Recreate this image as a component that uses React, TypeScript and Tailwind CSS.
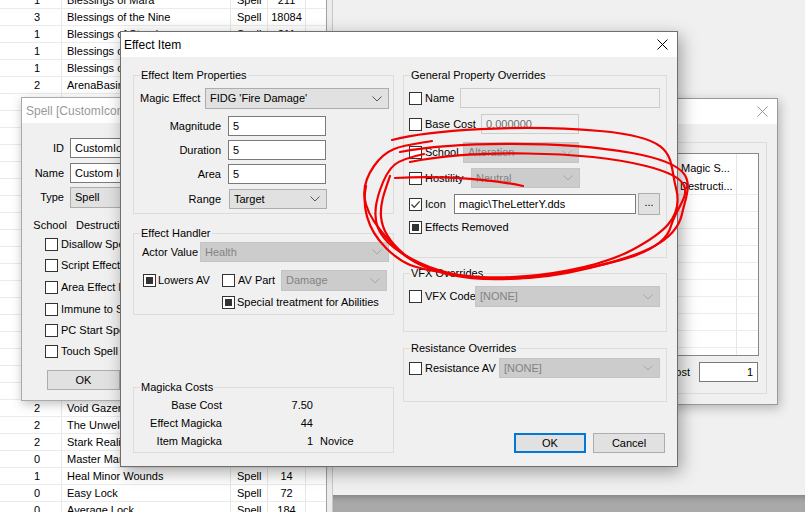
import React from 'react';
import clsx from 'clsx';

type Row = [string, string, string, string];

const listRows: Row[] = [
  ['1', 'Blessings of Mara', 'Spell', '211'],
  ['3', 'Blessings of the Nine', 'Spell', '18084'],
  ['1', 'Blessings of Stendarr', 'Spell', '211'],
  ['1', 'Blessings of Kynareth', 'Spell', '211'],
  ['1', 'Blessings of Julianos', 'Spell', '211'],
  ['2', 'ArenaBasinLesserBlessing', 'Spell', '20'],
  ['1', 'Fortify Magicka', 'Spell', '40'],
  ['1', 'Resist Fire', 'Spell', '33'],
  ['1', 'Resist Frost', 'Spell', '33'],
  ['1', 'Resist Shock', 'Spell', '33'],
  ['2', 'Shield', 'Spell', '28'],
  ['2', 'Fire Shield', 'Spell', '45'],
  ['2', 'Frost Shield', 'Spell', '45'],
  ['2', 'Shock Shield', 'Spell', '45'],
  ['0', 'Flare', 'Spell', '8'],
  ['0', 'Frostbite', 'Spell', '8'],
  ['0', 'Sparks', 'Spell', '8'],
  ['1', 'Fireball', 'Spell', '36'],
  ['1', 'Cold Touch', 'Spell', '20'],
  ['1', 'Shocking Burst', 'Spell', '52'],
  ['2', 'Night-Eye', 'Spell', '12'],
  ['2', 'Light', 'Spell', '10'],
  ['2', 'Feather', 'Spell', '16'],
  ['2', 'Water Breathing', 'Spell', '30'],
  ['2', 'Void Gazer', 'Spell', '120'],
  ['2', 'The Unwelcome Guest', 'Spell', '86'],
  ['2', 'Stark Reality', 'Spell', '60'],
  ['0', 'Master Mark', 'Spell', '420'],
  ['1', 'Heal Minor Wounds', 'Spell', '14'],
  ['0', 'Easy Lock', 'Spell', '72'],
  ['0', 'Average Lock', 'Spell', '184'],
];

function Chevron({ color = '#555' }: { color?: string }) {
  return (
    <svg width="10" height="6" viewBox="0 0 10 6" className="shrink-0">
      <path d="M0.5 0.5 L5 5 L9.5 0.5" fill="none" stroke={color} strokeWidth="1" />
    </svg>
  );
}

function CloseX({ color = '#000' }: { color?: string }) {
  return (
    <svg width="11" height="11" viewBox="0 0 11 11" className="shrink-0">
      <path d="M0.5 0.5 L10.5 10.5 M10.5 0.5 L0.5 10.5" stroke={color} strokeWidth="1" />
    </svg>
  );
}

function Box({ state = 'off' }: { state?: 'off' | 'on' | 'fill' }) {
  return (
    <span className="flex h-[13px] w-[13px] shrink-0 items-center justify-center border border-[#333] bg-white">
      {state === 'fill' && <span className="h-[7px] w-[7px] bg-[#333]" />}
      {state === 'on' && (
        <svg width="11" height="11" viewBox="0 0 11 11">
          <path d="M1.5 5.5 L4.2 8.3 L9.6 2.4" fill="none" stroke="#333" strokeWidth="1.2" />
        </svg>
      )}
    </span>
  );
}

function Combo({ text, className, disabled }: { text: string; className: string; disabled?: boolean }) {
  return (
    <div
      className={clsx(
        'flex shrink-0 items-center justify-between border pl-[4px] pr-[6px]',
        disabled ? 'border-[#c4c4c4] bg-[#cccccc] text-[#838383]' : 'border-[#adadad] bg-[#e1e1e1] text-black',
        className,
      )}
    >
      <span className="whitespace-nowrap">{text}</span>
      <Chevron color={disabled ? '#a6a6a6' : '#555'} />
    </div>
  );
}

function Field({ text, className, disabled, right }: { text: string; className: string; disabled?: boolean; right?: boolean }) {
  return (
    <div
      className={clsx(
        'flex shrink-0 items-center border px-[4px] whitespace-nowrap',
        disabled ? 'border-[#cccccc] bg-[#f0f0f0] text-[#6d6d6d]' : 'border-[#7a7a7a] bg-white text-black',
        right && 'justify-end',
        className,
      )}
    >
      {text}
    </div>
  );
}

function Group({ title, className, children }: { title: string; className: string; children?: React.ReactNode }) {
  return (
    <div className={clsx('relative flex flex-col border border-[#dcdcdc]', className)}>
      <span className="absolute -top-[8px] left-[6px] bg-[#f0f0f0] px-[1px] leading-[14px] whitespace-nowrap">{title}</span>
      {children}
    </div>
  );
}

function Btn({ children, primary, className }: { children: React.ReactNode; primary?: boolean; className: string }) {
  return (
    <div
      className={clsx(
        'flex shrink-0 items-center justify-center bg-[#e1e1e1]',
        primary ? 'border-2 border-[#0078d7]' : 'border border-[#adadad]',
        className,
      )}
    >
      {children}
    </div>
  );
}

// hand-drawn red loops over the dialog
function Scribbles() {
  return (
    <svg className="pointer-events-none absolute left-0 top-0" width="805" height="512" viewBox="0 0 805 512">
      <g fill="none" stroke="#f00000" strokeWidth="2.2" strokeLinecap="round" strokeLinejoin="round">
        <path d="M392 140 C430 130, 520 124, 600 131 S668 158, 676 188 S662 234, 632 250 S540 280, 480 277 S402 257, 381 231 S360 186, 374 166 S402 146, 432 141" />
        <path d="M400 152 C450 142, 560 140, 632 153 S688 186, 682 214 S642 255, 590 268 S470 286, 420 263 S371 216, 380 190 S396 160, 424 154" />
        <path d="M410 162 C470 150, 582 150, 646 166 S678 200, 671 226 S622 262, 560 273 S438 282, 404 254 S381 202, 390 176" />
        <path d="M395 178 C430 176, 480 177, 523 186" />
        <path d="M366 186 C362 205, 366 228, 386 248 S420 268, 440 272" />
      </g>
    </svg>
  );
}

function BackList() {
  return (
    <div className="relative h-full w-[327px] shrink-0 overflow-hidden border-r border-[#a0a0a0] bg-white text-[11px]">
      <div className="-mt-[8px] flex flex-col">
        {listRows.map((r, i) => (
          <div key={i} className="flex h-[17px] shrink-0 items-center border-b border-[#ebebeb] leading-[16px]">
            <div className="h-full w-[62px] shrink-0 border-r border-[#e6e6e6] pr-[21px] text-right">{r[0]}</div>
            <div className="h-full w-[169px] shrink-0 overflow-hidden whitespace-nowrap border-r border-[#e6e6e6] pl-[5px]">{r[1]}</div>
            <div className="h-full w-[37px] shrink-0 border-r border-[#e6e6e6] pl-[6px]">{r[2]}</div>
            <div className="h-full w-[38px] shrink-0 border-r border-[#e6e6e6] text-center">{r[3]}</div>
          </div>
        ))}
      </div>
    </div>
  );
}

function SpellWindow() {
  const checks = [
    ['Disallow Spell Absorb/Reflect', 'mt-[4px]'],
    ['Script Effect Always Applies', 'mt-[8px]'],
    ['Area Effect Ignores LOS', 'mt-[9px]'],
    ['Immune to Silence', 'mt-[9px]'],
    ['PC Start Spell', 'mt-[8px]'],
    ['Touch Spell Explodes w/o Target', 'mt-[8px]'],
  ];
  return (
    <div className="absolute left-[21px] top-[97px] flex h-[304px] w-[200px] flex-col border border-[#aaaaaa] bg-[#f0f0f0] shadow-[1px_3px_10px_rgba(0,0,0,0.25)]">
      <div className="flex h-[25px] shrink-0 items-center bg-white pl-[4px] text-[12px] text-[#999]">Spell [CustomIconSpell]</div>
      <div className="flex flex-col text-[11px]">
        <div className="mt-[15px] flex h-[20px] items-center gap-[6px]">
          <span className="w-[45px] text-right">ID</span>
          <Field text="CustomIconSpell" className="h-[20px] w-[150px]" />
        </div>
        <div className="mt-[5px] flex h-[20px] items-center gap-[6px]">
          <span className="w-[45px] text-right">Name</span>
          <Field text="Custom Icon Spell" className="h-[20px] w-[150px]" />
        </div>
        <div className="mt-[4px] flex h-[21px] items-center gap-[6px]">
          <span className="w-[45px] text-right">Type</span>
          <Combo text="Spell" className="h-[21px] w-[150px]" />
        </div>
        <div className="mt-[8px] flex h-[18px] items-center gap-[9px]">
          <span className="w-[45px] text-right">School</span>
          <span>Destruction</span>
        </div>
        {checks.map(([t, m]) => (
          <div key={t} className={clsx('flex h-[13px] items-center gap-[3px] pl-[23px] whitespace-nowrap', m)}>
            <Box />
            <span>{t}</span>
          </div>
        ))}
        <Btn className="ml-[25px] mt-[12px] h-[20px] w-[73px]">OK</Btn>
      </div>
    </div>
  );
}

function SideWindow() {
  return (
    <div className="absolute left-[670px] top-[98px] flex h-[307px] w-[108px] flex-col border border-[#999] bg-[#f0f0f0] shadow-[2px_3px_10px_rgba(0,0,0,0.25)]">
      <div className="flex h-[25px] shrink-0 items-center justify-end bg-white pr-[9px]">
        <CloseX color="#999" />
      </div>
      <div className="flex flex-col pl-[1px] pr-[10px] pt-[18px] text-[11px]">
        <div className="flex h-[252px] flex-col border border-[#dcdcdc]">
          <div className="mr-[7px] mt-[10px] flex h-[203px] flex-col overflow-hidden border border-[#828790] bg-white">
            <div className="flex h-[24px] shrink-0">
              <div className="w-[63px] shrink-0 border-r border-[#e6e6e6] pl-[7px] pt-[6px] whitespace-nowrap">Magic S...</div>
              <div className="flex-1" />
            </div>
            {['Destructi...', '', '', '', '', '', '', '', '', '', ''].map((t, i) => (
              <div key={i} className="flex h-[17px] shrink-0 border-b border-[#ececec]">
                <div className="w-[63px] shrink-0 border-r border-[#e6e6e6] pl-[6px] leading-[16px] whitespace-nowrap">{t}</div>
                <div className="flex-1" />
              </div>
            ))}
          </div>
          <div className="mt-[6px] flex h-[20px] items-center">
            <div className="flex w-[17px] justify-end whitespace-nowrap">Cost</div>
            <Field text="1" right className="ml-[9px] h-[20px] w-[59px]" />
          </div>
        </div>
      </div>
    </div>
  );
}

function EffectItem() {
  return (
    <div className="absolute left-[120px] top-[31px] flex h-[436px] w-[558px] flex-col border border-[#6f6f6f] bg-[#f0f0f0] shadow-[3px_5px_16px_rgba(0,0,0,0.35)]">
      <div className="flex h-[25px] shrink-0 items-center justify-between bg-white pl-[3px] pr-[9px] text-[12px]">
        <span>Effect Item</span>
        <CloseX />
      </div>
      <div className="flex gap-[9px] pl-[12px] pt-[18px] text-[11px]">
        {/* left column */}
        <div className="flex w-[261px] shrink-0 flex-col">
          <Group title="Effect Item Properties" className="h-[139px]">
            <div className="mt-[12px] flex h-[21px] items-center pl-[6px]">
              <span className="w-[65px] shrink-0 whitespace-nowrap">Magic Effect</span>
              <Combo text="FIDG 'Fire Damage'" className="h-[21px] w-[184px]" />
            </div>
            {[
              ['Magnitude', 'mt-[7px]'],
              ['Duration', 'mt-[4px]'],
              ['Area', 'mt-[4px]'],
            ].map(([l, m]) => (
              <div key={l} className={clsx('flex h-[20px] items-center gap-[7px]', m)}>
                <span className="w-[87px] shrink-0 text-right">{l}</span>
                <Field text="5" className="h-[20px] w-[98px]" />
              </div>
            ))}
            <div className="mt-[5px] flex h-[20px] items-center gap-[8px]">
              <span className="w-[87px] shrink-0 text-right">Range</span>
              <Combo text="Target" className="h-[20px] w-[98px]" />
            </div>
          </Group>

          <Group title="Effect Handler" className="mt-[19px] h-[82px]">
            <div className="mt-[8px] flex h-[20px] items-center pl-[8px]">
              <span className="w-[58px] shrink-0 whitespace-nowrap">Actor Value</span>
              <Combo disabled text="Health" className="h-[20px] w-[189px]" />
            </div>
            <div className="mt-[8px] flex h-[21px] items-center pl-[9px]">
              <div className="flex w-[79px] shrink-0 items-center gap-[2px]">
                <Box state="fill" />
                <span>Lowers AV</span>
              </div>
              <Box />
              <span className="ml-[3px] w-[43px] shrink-0">AV Part</span>
              <Combo disabled text="Damage" className="h-[21px] w-[106px]" />
            </div>
            <div className="mt-[5px] flex h-[13px] items-center gap-[2px] pl-[88px] whitespace-nowrap">
              <Box state="fill" />
              <span>Special treatment for Abilities</span>
            </div>
          </Group>

          <Group title="Magicka Costs" className="mt-[72px] h-[66px]">
            <div className="mt-[8px] flex flex-col">
              {[
                ['Base Cost', '7.50', ''],
                ['Effect Magicka', '44', ''],
                ['Item Magicka', '1', 'Novice'],
              ].map(([l, v, n]) => (
                <div key={l} className="flex h-[18px] items-center">
                  <span className="w-[88px] shrink-0 text-right">{l}</span>
                  <span className="w-[91px] shrink-0 text-right">{v}</span>
                  <span className="ml-[7px]">{n}</span>
                </div>
              ))}
            </div>
          </Group>
        </div>

        {/* right column */}
        <div className="flex w-[264px] shrink-0 flex-col">
          <Group title="General Property Overrides" className="h-[183px]">
            <div className="mt-[12px] flex h-[20px] items-center pl-[5px]">
              <Box />
              <span className="ml-[3px] w-[35px] shrink-0">Name</span>
              <Field disabled text="" className="h-[20px] w-[200px]" />
            </div>
            <div className="mt-[6px] flex h-[20px] items-center pl-[5px]">
              <Box />
              <span className="ml-[3px] w-[56px] shrink-0 whitespace-nowrap">Base Cost</span>
              <Field disabled text="0.000000" className="h-[20px] w-[98px]" />
            </div>
            <div className="mt-[8px] flex h-[21px] items-center pl-[5px]">
              <Box />
              <span className="ml-[3px] w-[38px] shrink-0">School</span>
              <Combo disabled text="Alteration" className="h-[21px] w-[116px]" />
            </div>
            <div className="mt-[5px] flex h-[20px] items-center pl-[5px]">
              <Box />
              <span className="ml-[3px] w-[46px] shrink-0">Hostility</span>
              <Combo disabled text="Neutral" className="h-[20px] w-[109px]" />
            </div>
            <div className="mt-[5px] flex h-[22px] items-center pl-[5px]">
              <Box state="on" />
              <span className="ml-[3px] w-[29px] shrink-0">Icon</span>
              <Field text={'magic\\TheLetterY.dds'} className="h-[20px] w-[182px]" />
              <Btn className="ml-[2px] h-[22px] w-[22px] pb-[4px]">...</Btn>
            </div>
            <div className="mt-[6px] flex h-[13px] items-center gap-[3px] pl-[5px] whitespace-nowrap">
              <Box state="fill" />
              <span>Effects Removed</span>
            </div>
          </Group>

          <Group title="VFX Overrides" className="mt-[15px] h-[59px]">
            <div className="mt-[12px] flex h-[21px] items-center pl-[5px]">
              <Box />
              <span className="ml-[3px] w-[50px] shrink-0 whitespace-nowrap">VFX Code</span>
              <Combo disabled text="[NONE]" className="h-[21px] w-[185px]" />
            </div>
          </Group>

          <Group title="Resistance Overrides" className="mt-[16px] h-[54px]">
            <div className="mt-[9px] flex h-[20px] items-center pl-[5px]">
              <Box />
              <span className="ml-[3px] w-[74px] shrink-0 whitespace-nowrap">Resistance AV</span>
              <Combo disabled text="[NONE]" className="h-[20px] w-[161px]" />
            </div>
          </Group>

          <div className="mt-[31px] flex gap-[7px] pl-[111px]">
            <Btn primary className="h-[20px] w-[72px]">OK</Btn>
            <Btn className="h-[20px] w-[72px]">Cancel</Btn>
          </div>
        </div>
      </div>
    </div>
  );
}

export default function App() {
  return (
    <div className="relative h-[512px] w-[805px] overflow-hidden bg-[#ababab] font-['Liberation_Sans',Arial,sans-serif] text-black">
      <div className="flex h-full">
        <BackList />
        <div className="h-full w-[6px] shrink-0 border-r border-[#c8c8c8] bg-[#ececec]" />
        <div className="flex h-full flex-1 flex-col">
          <div className="h-[495px] shrink-0 bg-[#f0f0f0]" />
          <div className="flex-1 bg-[#a9a9a9] shadow-[inset_0_6px_6px_-4px_rgba(0,0,0,0.25)]" />
        </div>
      </div>
      <SideWindow />
      <SpellWindow />
      <EffectItem />
      <Scribbles />
    </div>
  );
}
